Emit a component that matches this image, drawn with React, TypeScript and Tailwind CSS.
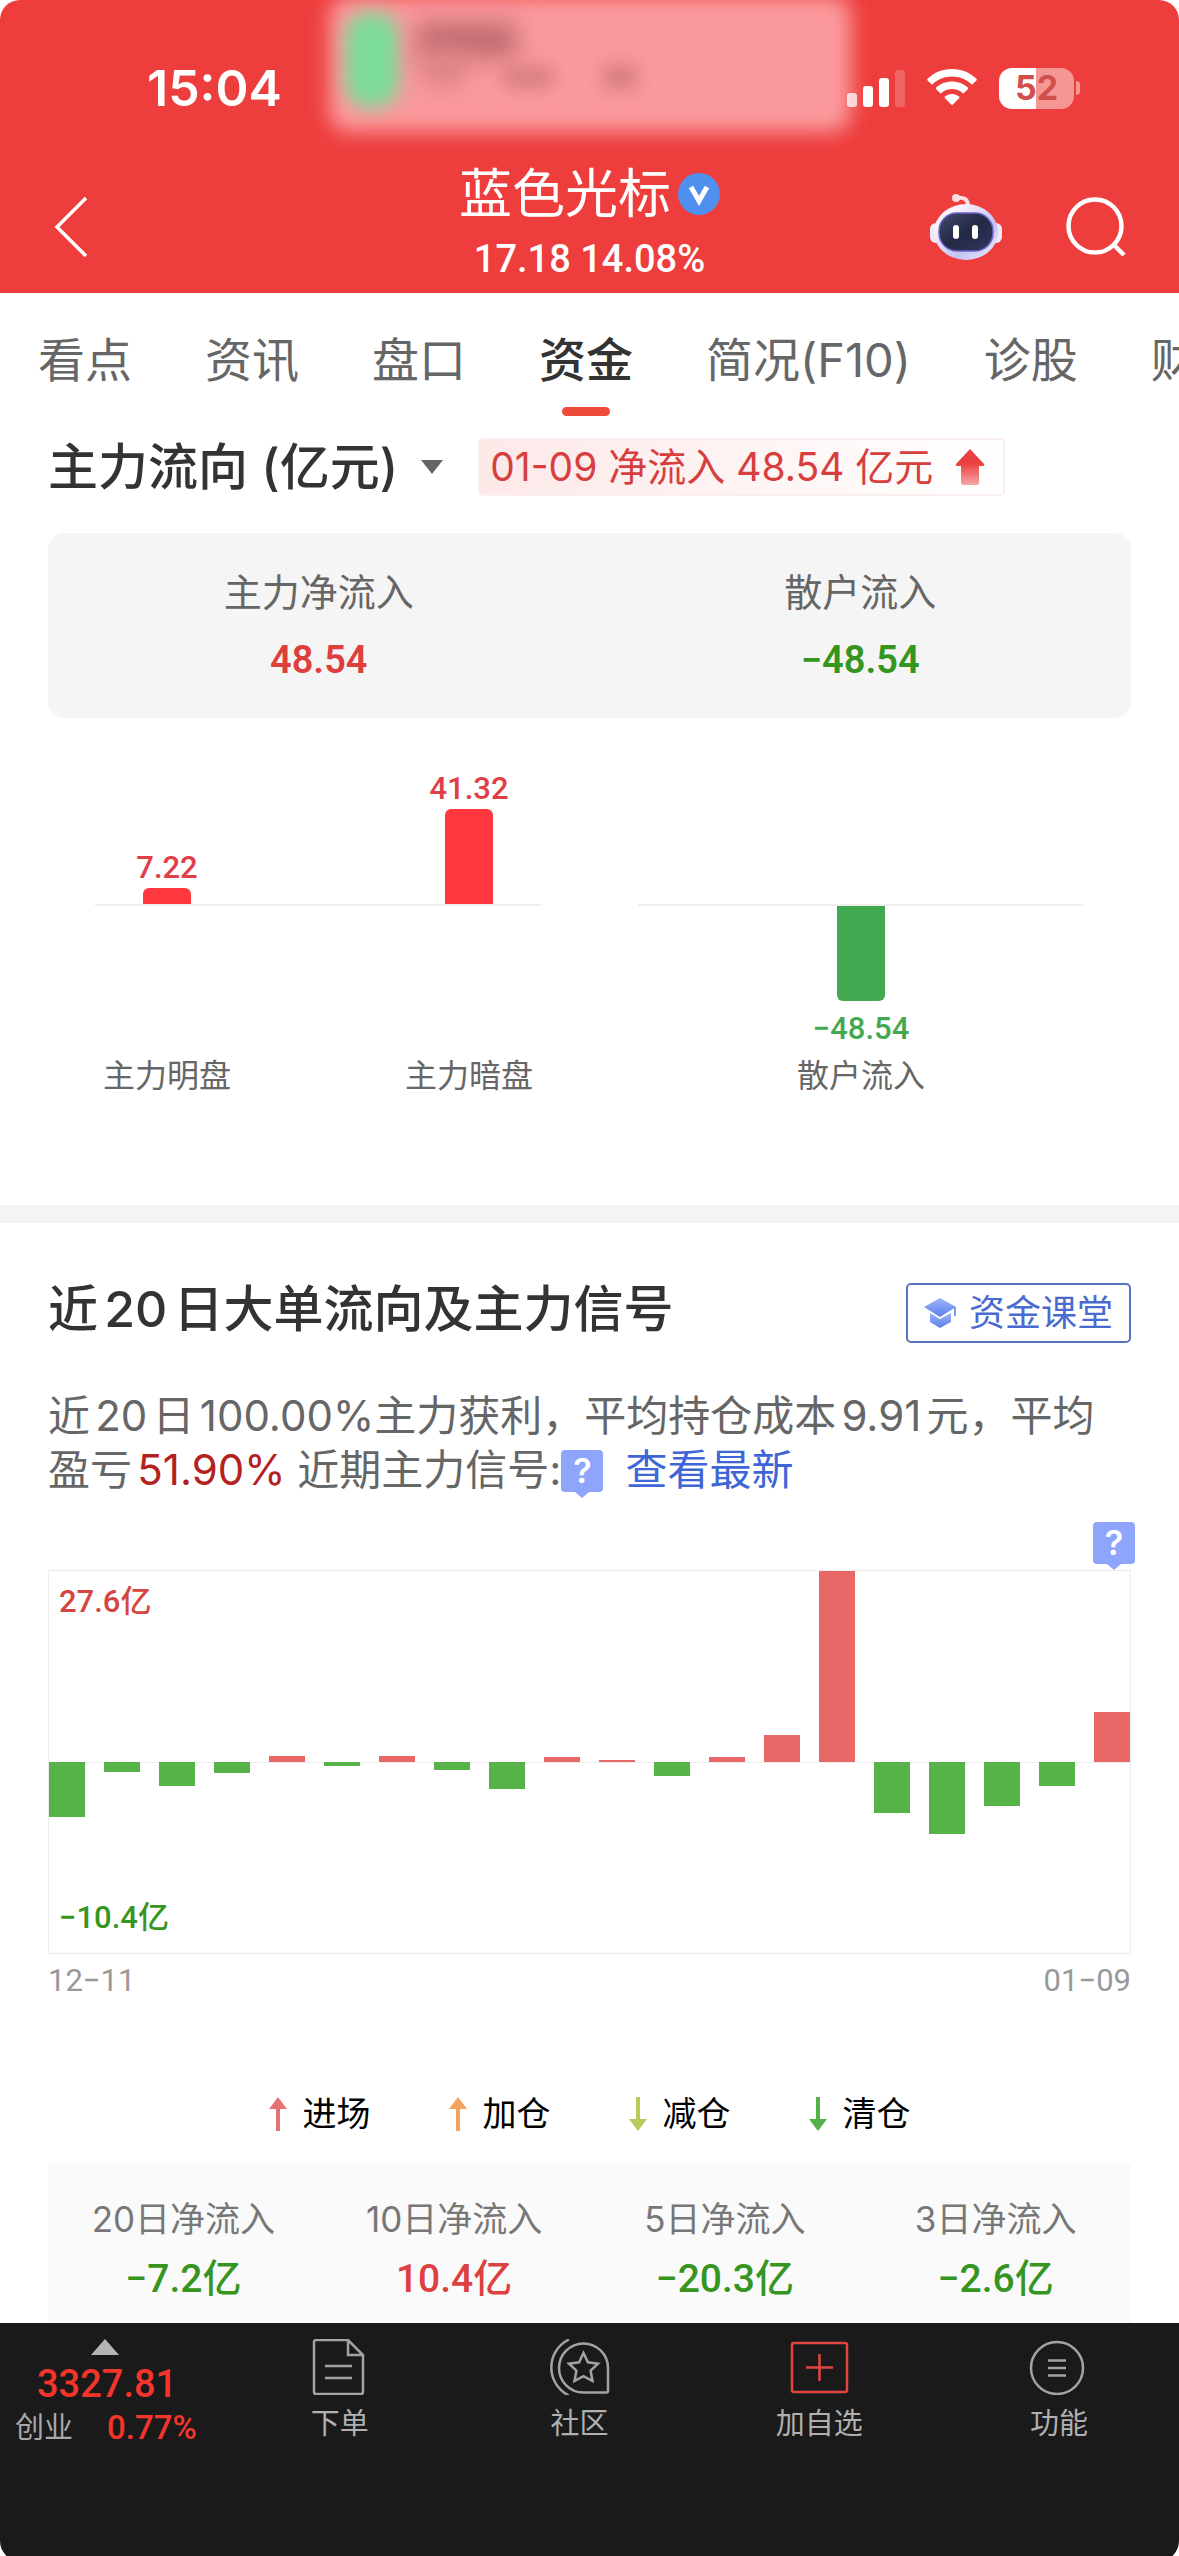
import { useState } from "react";
import clsx from "clsx";

const TABS = ["看点", "资讯", "盘口", "资金", "简况(F10)", "诊股", "财务"];

// bar heights in px, positive = net inflow
const DAYS = [-55, -10, -24, -11, 6, -4, 6, -8, -27, 5, 2, -14, 5, 27, 191, -51, -72, -44, -24, 50];

const LEGEND = [
  { label: "进场", color: "#e57373", up: true },
  { label: "加仓", color: "#f2a25c", up: true },
  { label: "减仓", color: "#b5cc5a", up: false },
  { label: "清仓", color: "#55b04a", up: false },
];

const TOTALS = [
  { label: "20日净流入", value: "−7.2亿", up: false },
  { label: "10日净流入", value: "10.4亿", up: true },
  { label: "5日净流入", value: "−20.3亿", up: false },
  { label: "3日净流入", value: "−2.6亿", up: false },
];

const NUM = "[font-family:Roboto,'Noto_Sans_CJK_SC',sans-serif]";

function StatusBar() {
  return (
    <div className="flex h-[162px] items-center justify-between pt-[14px] pr-[99px] pl-[147px] text-white">
      <span className="text-[50px] leading-[60px] font-semibold">15:04</span>
      <div className="flex items-center">
        <svg width="58" height="40" viewBox="0 0 58 40" fill="#fff">
          <rect x="0" y="25" width="10" height="14" rx="3" opacity="0.75" />
          <rect x="16" y="18" width="10" height="21" rx="3" />
          <rect x="32" y="10" width="10" height="29" rx="3" />
          <rect x="48" y="2" width="10" height="37" rx="3" opacity="0.2" />
        </svg>
        <svg className="ml-[22px]" width="50" height="38" viewBox="0 0 50 38" fill="#fff">
          <path d="M25 0C15.400 0 6.600 3.700 0.600 9.800c-.5.5-.5 1.200 0 1.700l3.600 3.600c.5.5 1.200.5 1.700 0C10.900 10.300 17.700 7.600 25 7.600s14.100 2.700 19.100 7.500c.5.5 1.200.5 1.700 0l3.600-3.600c.5-.5.5-1.200 0-1.700C43.400 3.700 34.600 0 25 0z" />
          <path d="M25 12.500c-6.100 0-11.700 2.300-15.800 6.100-.5.5-.5 1.200 0 1.700l3.700 3.700c.4.400 1.100.4 1.600 0 2.800-2.500 6.500-4 10.500-4s7.700 1.500 10.500 4c.5.4 1.200.4 1.600 0l3.700-3.700c.5-.5.5-1.200 0-1.700-4.100-3.800-9.700-6.100-15.800-6.100z" />
          <path d="M25 25c-2.700 0-5.100.9-7 2.500-.5.400-.5 1.200 0 1.700l6.200 6.300c.5.500 1.200.5 1.700 0l6.200-6.300c.5-.5.5-1.300 0-1.700-2-1.600-4.400-2.500-7.100-2.500z" />
        </svg>
        <span className="ml-[22px] flex h-[41px] w-[75px] items-center justify-center rounded-[13px] bg-linear-to-r from-white from-50% to-[#f49694] to-50% text-[34px] leading-[40px] font-bold text-[#d2504c]">
          52
        </span>
        <span className="ml-[2px] h-[14px] w-[4px] rounded-r-full bg-[#f49694]" />
      </div>
    </div>
  );
}

// frosted call banner that sits over the status bar
function Banner() {
  return (
    <div className="absolute inset-x-0 top-0 flex justify-center">
      <div className="relative h-[132px] w-[522px]">
        <div className="absolute inset-x-0 -top-1 bottom-0 rounded-[20px] bg-[#fb9a9e] blur-[10px]" />
        <div className="absolute top-[12px] left-[16px] h-[96px] w-[54px] rounded-[24px] bg-[#7ddc9b] blur-[9px]" />
        <div className="absolute top-[22px] left-[88px] h-[36px] w-[100px] bg-[#c06c70] blur-[12px]" />
        <div className="absolute top-[50px] left-[92px] h-[36px] w-[44px] bg-[#dc8286] blur-[12px]" />
        <div className="absolute top-[66px] left-[174px] h-[22px] w-[50px] bg-[#d67c80] blur-[9px]" />
        <div className="absolute top-[64px] left-[274px] h-[26px] w-[34px] bg-[#d67c80] blur-[9px]" />
      </div>
    </div>
  );
}

function Robot() {
  return (
    <svg width="74" height="68" viewBox="0 0 74 68">
      <defs>
        <linearGradient id="shell" x1="0" y1="0" x2="1" y2="1">
          <stop offset="0.2" stopColor="#fdf4fb" />
          <stop offset="0.65" stopColor="#c3c2f3" />
          <stop offset="1" stopColor="#f4f2fd" />
        </linearGradient>
        <linearGradient id="visor" x1="0" y1="0" x2="1" y2="1">
          <stop offset="0" stopColor="#444a70" />
          <stop offset="0.5" stopColor="#232845" />
          <stop offset="1" stopColor="#31375e" />
        </linearGradient>
      </defs>
      <path d="M28 5c7-1 11 1 11 8" fill="none" stroke="#fbdfe4" strokeWidth="4" />
      <circle cx="27" cy="5" r="4" fill="#fbdfe4" />
      <rect x="1" y="30" width="14" height="20" rx="6" fill="#eee9fa" />
      <rect x="59" y="30" width="14" height="20" rx="6" fill="#eee9fa" />
      <ellipse cx="37" cy="39" rx="32" ry="28" fill="url(#shell)" />
      <rect x="10" y="20" width="54" height="38" rx="18" fill="url(#visor)" stroke="#6e63c9" strokeWidth="1.500" />
      <rect x="24" y="32" width="6" height="14" rx="3" fill="#fff" />
      <rect x="43" y="32" width="6" height="14" rx="3" fill="#fff" />
    </svg>
  );
}

function Header() {
  return (
    <header className="relative h-[293px] overflow-hidden rounded-t-[20px] bg-[#ed3e3d]">
      <Banner />
      <div className="relative">
        <StatusBar />
        <div className="grid grid-cols-[1fr_auto_1fr] items-center px-[52px] text-white">
          <button aria-label="返回" className="justify-self-start">
            <svg width="36" height="62" viewBox="0 0 36 62" fill="none" stroke="#fff" strokeWidth="3.500">
              <path d="M34 2L5 31l29 29" />
            </svg>
          </button>
          <div className="text-center">
            <h1 className="flex items-center justify-center gap-[7px] text-[53px] leading-[64px]">
              蓝色光标
              <svg width="42" height="42" viewBox="0 0 42 42">
                <circle cx="21" cy="21" r="21" fill="#4f90ee" />
                <path d="M13 14l8 14 8-14" fill="none" stroke="#fff" strokeWidth="5" />
              </svg>
            </h1>
            <p className={clsx(NUM, "text-[38px] leading-[66px] font-medium")}>17.18 14.08%</p>
          </div>
          <div className="flex items-center gap-[62px] justify-self-end">
            <button aria-label="智能助手"><Robot /></button>
            <button aria-label="搜索">
              <svg width="62" height="60" viewBox="0 0 62 60" fill="none" stroke="#fff" strokeWidth="4.500">
                <circle cx="30" cy="29" r="26.500" />
                <path d="M49 48l10 10" />
              </svg>
            </button>
          </div>
        </div>
      </div>
    </header>
  );
}

function HelpBadge({ className }: { className?: string }) {
  return (
    <button aria-label="说明" className={clsx("inline-flex flex-col items-center", className)}>
      <span className="flex h-[42px] w-[42px] items-center justify-center rounded-[4px] bg-[#8ea5fb] text-[34px] leading-[42px] font-semibold text-white">
        ?
      </span>
      <svg width="14" height="6" viewBox="0 0 14 6" fill="#8ea5fb">
        <path d="M0 0h14L7 6z" />
      </svg>
    </button>
  );
}

function MiniBar({ name, value, height, down }: { name: string; value: string; height: number; down?: boolean }) {
  const num = clsx(NUM, "text-[31px] font-medium");
  return (
    <div className="flex w-[48px] flex-col items-center whitespace-nowrap">
      <div className="flex h-[186px] flex-col items-center justify-end">
        {!down && (
          <>
            <span className={clsx(num, "mb-1 leading-[32px] text-[#df4048]")}>{value}</span>
            <div className="w-[48px] rounded-t-[6px] bg-[#ff383f]" style={{ height }} />
          </>
        )}
      </div>
      <div className="flex h-[148px] flex-col items-center pt-[2px]">
        {down && (
          <>
            <div className="w-[48px] rounded-b-[6px] bg-[#43a951]" style={{ height }} />
            <span className={clsx(num, "mt-2 leading-[40px] text-[#43a951]")}>{value}</span>
          </>
        )}
      </div>
      <span className="text-[32px] leading-[48px] text-[#666]">{name}</span>
    </div>
  );
}

function MainFlow() {
  return (
    <section className="px-[48px] pb-[105px]">
      <div className="mt-[22px] flex items-center">
        <button className="flex items-center gap-[22px] text-[50px] leading-[58px] font-medium text-[#333] [text-autospace:normal]">
          主力流向 (亿元)
          <svg width="24" height="14" viewBox="0 0 24 14" fill="#666">
            <path d="M1 0h22L12 14z" />
          </svg>
        </button>
        <div className="ml-[34px] flex h-[58px] items-center gap-[22px] rounded-[5px] border-2 border-[#fbeeee] bg-linear-to-r from-[#fde8e8] to-white pr-[18px] pl-[10px] text-[39px] whitespace-nowrap text-[#d73f3f]">
          01-09 净流入 48.54 亿元
          <svg width="30" height="36" viewBox="0 0 30 36">
            <defs>
              <linearGradient id="rise" x1="0" y1="0" x2="0" y2="1">
                <stop offset="0.4" stopColor="#e9413f" />
                <stop offset="1" stopColor="#f7a8a8" />
              </linearGradient>
            </defs>
            <path d="M15 0l14 15c1 1 0 2-1 2h-4v17a2 2 0 01-2 2H8a2 2 0 01-2-2V17H2c-1 0-2-1-1-2z" fill="url(#rise)" />
          </svg>
        </div>
      </div>

      <dl className="mt-[37px] grid grid-cols-2 rounded-[16px] bg-[#f5f5f5] pt-[33px] pb-[28px] text-center">
        <div>
          <dt className="text-[38px] leading-[52px] text-[#666]">主力净流入</dt>
          <dd className={clsx(NUM, "mt-3 text-[38px] leading-[60px] font-semibold text-[#dd3f3c]")}>48.54</dd>
        </div>
        <div>
          <dt className="text-[38px] leading-[52px] text-[#666]">散户流入</dt>
          <dd className={clsx(NUM, "mt-3 text-[38px] leading-[60px] font-semibold text-[#36951f]")}>−48.54</dd>
        </div>
      </dl>

      <div className="grid grid-cols-2 gap-[97px] px-[47px]">
        <div className="flex justify-between bg-[linear-gradient(#efefef,#efefef)] bg-[length:100%_2px] bg-[position:0_186px] bg-no-repeat px-[48px]">
          <MiniBar name="主力明盘" value="7.22" height={16} />
          <MiniBar name="主力暗盘" value="41.32" height={95} />
        </div>
        <div className="flex justify-center bg-[linear-gradient(#efefef,#efefef)] bg-[length:100%_2px] bg-[position:0_186px] bg-no-repeat">
          <MiniBar name="散户流入" value="−48.54" height={95} down />
        </div>
      </div>
    </section>
  );
}

function DailyChart() {
  return (
    <div className="relative flex h-[384px] justify-between border border-[#ececec] bg-[linear-gradient(#eeeeee,#eeeeee)] bg-[length:100%_1px] bg-[position:0_191px] bg-no-repeat">
      {DAYS.map((h, i) => (
        <div key={i} className="grid w-[36px] grid-rows-2">
          <div className="flex items-end">
            {h > 0 && <div className="w-full bg-[#e86868]" style={{ height: h }} />}
          </div>
          <div>{h < 0 && <div className="w-full bg-[#57b24a]" style={{ height: -h }} />}</div>
        </div>
      ))}
      <span className={clsx(NUM, "absolute top-[11px] left-[10px] text-[31px] leading-[40px] font-medium text-[#d6453f]")}>
        27.6亿
      </span>
      <span className={clsx(NUM, "absolute bottom-[15px] left-[10px] text-[31px] leading-[40px] font-medium text-[#36951f]")}>
        −10.4亿
      </span>
    </div>
  );
}

function Signals() {
  return (
    <section className="px-[48px] pt-[60px]">
      <div className="flex h-[60px] items-start justify-between">
        <h2 className="text-[50px] leading-[52px] font-medium text-[#333] [text-autospace:normal]">
          近20日大单流向及主力信号
        </h2>
        <button className="flex h-[60px] items-center gap-[12px] rounded-[5px] border-2 border-[#5873c4] px-[16px] text-[36px] text-[#4a6ad0]">
          <svg width="33" height="32" viewBox="0 0 33 32">
            <defs>
              <linearGradient id="cap" x1="0" y1="0" x2="0" y2="1">
                <stop offset="0" stopColor="#9db4fa" />
                <stop offset="1" stopColor="#5a80ea" />
              </linearGradient>
            </defs>
            <path d="M16 1l16 9-16 10L0 10z" fill="url(#cap)" />
            <path d="M6 16l10 6 11-6v9l-11 6-10-6z" fill="url(#cap)" />
            <path d="M31 10v9" stroke="#7f9af0" strokeWidth="2" />
          </svg>
          资金课堂
        </button>
      </div>

      <p className="mt-[46px] text-[42px] leading-[54px] text-[#666] [text-autospace:normal]">
        近20日100.00%主力获利，平均持仓成本9.91元，平均
        <br />
        盈亏<span className="text-[#b3221f]">51.90%</span> 近期主力信号:
        <HelpBadge className="h-[48px] align-middle" />
        <a href="#latest" className="ml-[22px] text-[#3e66d6]">查看最新</a>
      </p>

      <div className="-mr-1 mt-6 flex h-[48px] justify-end">
        <HelpBadge />
      </div>
      <DailyChart />
      <div className={clsx(NUM, "mt-[7px] flex justify-between text-[31px] leading-[40px] text-[#999]")}>
        <span>12−11</span>
        <span>01−09</span>
      </div>

      <ul className="mt-[89px] flex justify-center gap-[78px]">
        {LEGEND.map(l => (
          <li key={l.label} className="flex items-center gap-[16px] text-[34px] leading-[48px] text-black">
            <svg width="18" height="34" viewBox="0 0 18 34" fill={l.color}>
              {l.up ? <path d="M9 0l9 12h-7v22H7V12H0z" /> : <path d="M9 34l9-12h-7V0H7v22H0z" />}
            </svg>
            {l.label}
          </li>
        ))}
      </ul>

      <dl className="mt-[26px] grid grid-cols-4 bg-[#fafafa] pt-[31px] pb-4 text-center">
        {TOTALS.map(t => (
          <div key={t.label}>
            <dt className="text-[35px] leading-[48px] text-[#777]">{t.label}</dt>
            <dd className={clsx(NUM, "mt-2 text-[39px] leading-[56px] font-medium", t.up ? "text-[#dd4040]" : "text-[#36951f]")}>
              {t.value}
            </dd>
          </div>
        ))}
      </dl>
    </section>
  );
}

function Footer() {
  const item = "flex flex-1 flex-col items-center gap-[9px] text-[29px] leading-[40px] text-[#b0b0b0]";
  const icon = { width: 62, height: 56, viewBox: "0 0 62 56", fill: "none", stroke: "#a3a3a3", strokeWidth: 2.5 };
  return (
    <footer className="flex rounded-b-[20px] bg-[#1a1a1a] pt-4 pb-[113px]">
      <button className={clsx(NUM, "flex w-[220px] flex-col items-start text-[#f4352c]")}>
        <svg className="ml-[91px]" width="28" height="16" viewBox="0 0 28 16" fill="#b5b5b5">
          <path d="M14 0l14 16H0z" />
        </svg>
        <span className="mt-[5px] ml-[37px] text-[38px] leading-[48px] font-medium">3327.81</span>
        <span className="ml-[15px] flex items-center gap-[34px] text-[33px] leading-[40px] font-medium">
          <span className="text-[29px] font-normal text-[#a8a8a8]">创业</span>0.77%
        </span>
      </button>
      <nav className="flex flex-1">
        <button className={item}>
          <svg {...icon}>
            <path d="M5 3a2 2 0 012-2h32l15 15v37a2 2 0 01-2 2H7a2 2 0 01-2-2z M39 1v15h15 M16 27h27 M16 39h27" />
          </svg>
          下单
        </button>
        <button className={item}>
          <svg {...icon} strokeLinecap="round">
            <path d="M59 29v23a1.500 1.500 0 01-1.500 1.500H34.500A24.500 24.500 0 1159 29z" />
            <path d="M19 1A31 31 0 0019 56" />
            <path d="M34.500 14l4.400 9.300 10.100 1.400-7.400 7 1.900 10.300-9-4.900-9 4.900 1.900-10.300-7.400-7 10.100-1.400z" />
          </svg>
          社区
        </button>
        <button className={item}>
          <svg {...icon} stroke="#e2453f">
            <rect x="4" y="4" width="55" height="49" rx="2" />
            <path d="M31.500 15v27M18 28.500h27" />
          </svg>
          加自选
        </button>
        <button className={item}>
          <svg {...icon}>
            <circle cx="29" cy="29" r="26" />
            <path d="M20 21.500h18M20 29h18M20 36.500h18" />
          </svg>
          功能
        </button>
      </nav>
    </footer>
  );
}

export default function App() {
  const [tab, setTab] = useState("资金");

  return (
    <div className="overflow-hidden bg-white [font-family:Inter,'Noto_Sans_CJK_SC',sans-serif]">
      <Header />
      <nav className="flex gap-[73px] overflow-hidden pt-[34px] pl-[38px]">
        {TABS.map(t => (
          <button
            key={t}
            onClick={() => setTab(t)}
            className={clsx(
              "flex shrink-0 flex-col items-center gap-[14px] text-[47px] leading-[66px]",
              t === tab ? "font-medium text-[#333]" : "text-[#666]"
            )}
          >
            {t}
            <span className={clsx("h-[9px] w-[48px] rounded-full", t === tab && "bg-[#ef4b3b]")} />
          </button>
        ))}
      </nav>
      <MainFlow />
      <div className="h-[18px] bg-[#f4f4f4]" />
      <Signals />
      <Footer />
    </div>
  );
}
